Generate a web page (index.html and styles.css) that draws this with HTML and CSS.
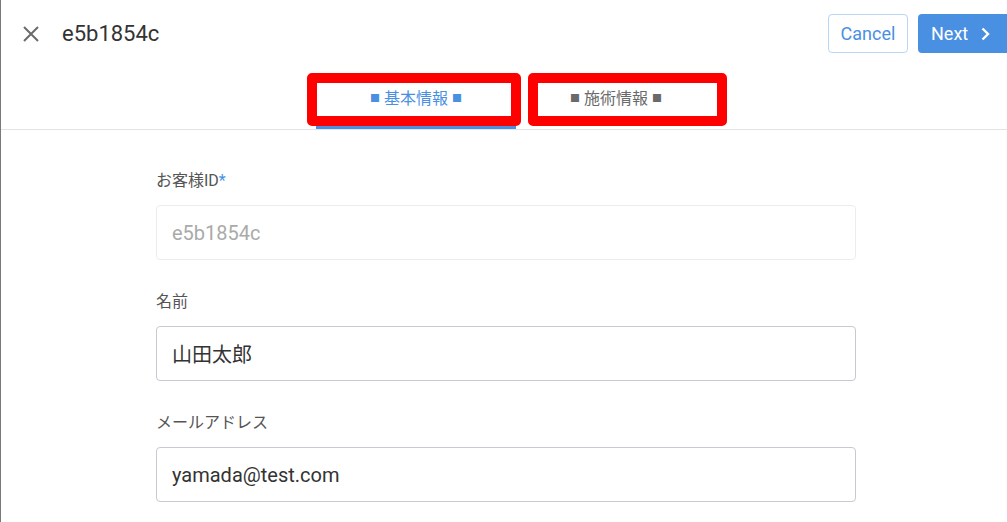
FILE: index.html
```html
<!DOCTYPE html>
<html lang="ja">
<head>
    <meta charset="UTF-8">
    <meta name="viewport" content="width=device-width, initial-scale=1.0">
    <title>e5b1854c</title>
    <link rel="stylesheet" href="styles.css">
</head>
<body>
    <div class="app">
        <!-- header -->
        <div class="header">
            <div class="title-wrap">
                <svg class="close-icon" width="18" height="18" viewBox="0 0 18 18">
                    <path d="M2 2 L16 16 M16 2 L2 16" stroke="#6b6b6b" stroke-width="2" fill="none"/>
                </svg>
                <span class="title">e5b1854c</span>
            </div>
            <div class="actions">
                <button class="btn btn-cancel">Cancel</button>
                <button class="btn btn-next">Next
                    <svg width="10" height="14" viewBox="0 0 10 14">
                        <path d="M2.5 1.5 L8 7 L2.5 12.5" stroke="#fff" stroke-width="2.4" fill="none"/>
                    </svg>
                </button>
            </div>
        </div>

        <!-- tabs -->
        <div class="tab-bar">
            <div class="tab active"><span class="sq">■</span> 基本情報 <span class="sq">■</span></div>
            <div class="tab"><span class="sq">■</span> 施術情報 <span class="sq">■</span></div>
            <div class="mark mark-1"></div>
            <div class="mark mark-2"></div>
        </div>

        <!-- form -->
        <div class="form">
            <div class="field">
                <label>お客様ID<span class="req">*</span></label>
                <div class="input disabled">e5b1854c</div>
            </div>
            <div class="field">
                <label>名前</label>
                <div class="input">山田太郎</div>
            </div>
            <div class="field">
                <label>メールアドレス</label>
                <div class="input">yamada@test.com</div>
            </div>
        </div>
    </div>
</body>
</html>
```

FILE: styles.css
```css
body {
    margin: 0;
    font-family: Roboto, "Noto Sans CJK JP", sans-serif;
    background-color: #fff;
    color: #333;
}

.app {
    height: 522px;
    border-left: 1px solid #7a7a7a;
    overflow: hidden;
}

.header {
    height: 67px;
    display: flex;
    justify-content: space-between;
    align-items: center;
}

.title-wrap {
    display: flex;
    align-items: center;
    padding-left: 21px;
}

.close-icon {
    margin-right: 22px;
}

.title {
    font-size: 22px;
    color: #333;
}

.actions {
    display: flex;
    gap: 10px;
    margin-right: -10px;
}

.btn {
    font-family: Roboto, sans-serif;
    font-size: 18px;
    height: 39px;
    border-radius: 4px;
    cursor: pointer;
}

.btn-cancel {
    width: 80px;
    background: #fff;
    color: #4a90e2;
    border: 1px solid #b9d6f5;
}

.btn-next {
    width: 99px;
    background: #4a90e2;
    color: #fff;
    border: none;
    display: flex;
    align-items: center;
    padding-left: 13px;
    gap: 12px;
}

.tab-bar {
    position: relative;
    display: flex;
    padding-left: 315px;
    border-bottom: 1px solid #e3e3e3;
}

.tab {
    width: 200px;
    height: 59px;
    display: flex;
    align-items: center;
    justify-content: center;
    gap: 4px;
    font-size: 16px;
    color: #6a6a6a;
    border-bottom: 3px solid transparent;
}

.tab .sq {
    font-size: 10px;
    padding-top: 2px;
}

.tab.active {
    color: #4a90e2;
    border-bottom-color: #4a90e2;
}

/* red annotation boxes */
.mark {
    position: absolute;
    top: 6px;
    height: 33px;
    border: 10px solid #ff0000;
    border-radius: 5px;
}

.mark-1 {
    left: 306px;
    width: 194px;
}

.mark-2 {
    left: 527px;
    width: 179px;
}

.form {
    width: 700px;
    padding: 39px 0 0 155px;
}

.field {
    margin-bottom: 30px;
}

.field label {
    display: block;
    font-size: 16px;
    line-height: 24px;
    color: #555;
    margin-bottom: 12px;
}

.req {
    color: #4a90e2;
}

.input {
    height: 53px;
    border: 1px solid #c9c9d1;
    border-radius: 4px;
    display: flex;
    align-items: center;
    padding-left: 15px;
    font-size: 20px;
    color: #333;
}

.input.disabled {
    border-color: #ececec;
    color: #aaa;
}
```
